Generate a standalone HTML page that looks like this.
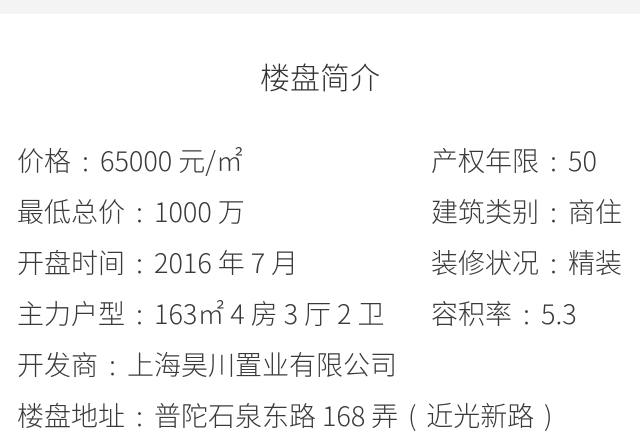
<!DOCTYPE html>
<html><head><meta charset="utf-8"><style>
html,body{margin:0;padding:0;background:#fff;width:640px;height:431px;overflow:hidden}
body{font-family:"Noto Sans CJK SC","Liberation Sans",sans-serif;color:#3a3a3a;font-weight:300}
.top{position:absolute;left:0;top:0;width:640px;height:14px;background:#f4f4f4}
.title{position:absolute;top:56px;left:0;width:640px;text-align:center;font-size:30px;line-height:40px;color:#333}
.r{position:absolute;font-size:27px;line-height:36px;white-space:nowrap}
.l{left:17px}.rt{left:431px}
.c{display:inline-block;width:29px;text-align:center}
.p{display:inline-block;width:28px;text-align:center}
</style></head><body>
<div class="top"></div>
<div class="title">楼盘简介</div>
<div class="r l" style="top:142px">价格<span class="c">:</span>65000 元/㎡</div>
<div class="r rt" style="top:142px">产权年限<span class="c">:</span>50</div>
<div class="r l" style="top:193px">最低总价<span class="c">:</span>1000 万</div>
<div class="r rt" style="top:193px">建筑类别<span class="c">:</span>商住</div>
<div class="r l" style="top:244px">开盘时间<span class="c">:</span>2016 年 7 月</div>
<div class="r rt" style="top:244px">装修状况<span class="c">:</span>精装</div>
<div class="r l" style="top:295px">主力户型<span class="c">:</span>163㎡ 4 房 3 厅 2 卫</div>
<div class="r rt" style="top:295px">容积率<span class="c">:</span>5.3</div>
<div class="r l" style="top:346px">开发商<span class="c">:</span>上海昊川置业有限公司</div>
<div class="r l" style="top:397px">楼盘地址<span class="c">:</span>普陀石泉东路 168 弄<span class="p">(</span>近光新路<span class="p">)</span></div>
</body></html>
